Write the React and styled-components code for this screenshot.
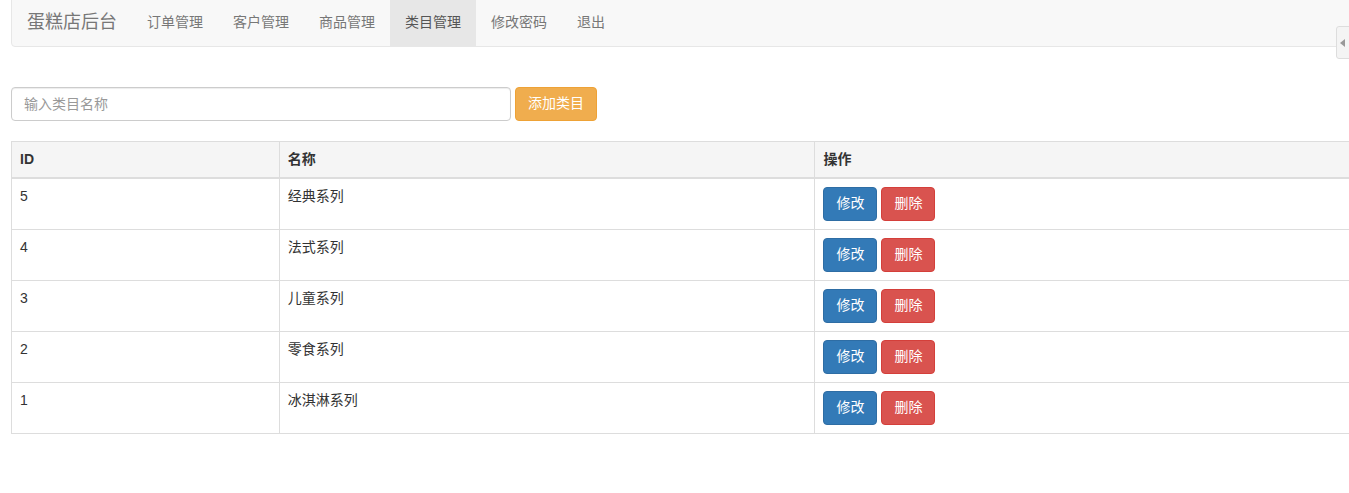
import React from "react";
import styled, { createGlobalStyle } from "styled-components";

const GlobalStyle = createGlobalStyle`
  * { box-sizing: border-box; }
  body {
    margin: 0;
    background: #fff;
    color: #333;
    font-family: "Liberation Sans", "Noto Sans CJK SC", Arial, sans-serif;
    font-size: 14px;
    line-height: 1.42857;
    overflow: hidden;
  }
`;

const Page = styled.div`
  padding-left: 11px;
  width: 1360px;
`;

const Navbar = styled.nav`
  display: flex;
  align-items: stretch;
  height: 48px;
  margin-top: -1px;
  background: #f8f8f8;
  border: 1px solid #e7e7e7;
  border-radius: 0 0 4px 4px;
`;

const Brand = styled.a`
  display: flex;
  align-items: center;
  padding: 0 15px;
  font-size: 18px;
  color: #777;
  text-decoration: none;
`;

const NavLink = styled.a`
  display: flex;
  align-items: center;
  padding: 0 15px;
  color: ${(p) => (p.$active ? "#555" : "#777")};
  background: ${(p) => (p.$active ? "#e7e7e7" : "transparent")};
  text-decoration: none;
`;

const SideTab = styled.div`
  position: fixed;
  top: 26px;
  right: -2px;
  width: 15px;
  height: 33px;
  background: #f4f4f4;
  border: 1px solid #ddd;
  border-radius: 3px 0 0 3px;
  display: flex;
  align-items: center;
  justify-content: center;
`;

const Arrow = styled.span`
  width: 0;
  height: 0;
  border-top: 4px solid transparent;
  border-bottom: 4px solid transparent;
  border-right: 5px solid #999;
  margin-right: 2px;
`;

const FormRow = styled.div`
  display: flex;
  align-items: center;
  gap: 4px;
  margin-top: 40px;
  margin-bottom: 20px;
`;

const Input = styled.input`
  width: 500px;
  height: 34px;
  padding: 6px 12px;
  font-size: 14px;
  font-family: inherit;
  color: #555;
  border: 1px solid #ccc;
  border-radius: 4px;
  box-shadow: inset 0 1px 1px rgba(0, 0, 0, 0.075);
  &::placeholder { color: #999; }
`;

const colors = {
  warning: ["#f0ad4e", "#eea236"],
  primary: ["#337ab7", "#2e6da4"],
  danger: ["#d9534f", "#d43f3a"],
};

const Button = styled.button`
  height: 34px;
  padding: 6px 12px;
  font-size: 14px;
  font-family: inherit;
  line-height: 1.42857;
  color: #fff;
  background: ${(p) => colors[p.$kind][0]};
  border: 1px solid ${(p) => colors[p.$kind][1]};
  border-radius: 4px;
  cursor: pointer;
`;

const Table = styled.table`
  width: 1340px;
  border-collapse: collapse;
  border: 1px solid #ddd;
`;

const Th = styled.th`
  width: ${(p) => p.$w};
  padding: 8px 8px 7px;
  text-align: left;
  font-weight: bold;
  background: #f5f5f5;
  border: 1px solid #ddd;
  border-bottom-width: 2px;
  vertical-align: bottom;
`;

const Td = styled.td`
  padding: 8px;
  border: 1px solid #ddd;
  vertical-align: top;
`;

const Actions = styled.div`
  display: flex;
  gap: 4px;
`;

const rows = [
  [5, "经典系列"],
  [4, "法式系列"],
  [3, "儿童系列"],
  [2, "零食系列"],
  [1, "冰淇淋系列"],
];

const links = ["订单管理", "客户管理", "商品管理", "类目管理", "修改密码", "退出"];

export default function App() {
  return (
    <Page>
      <GlobalStyle />
      <Navbar>
        <Brand>蛋糕店后台</Brand>
        {links.map((l) => (
          <NavLink key={l} $active={l === "类目管理"}>
            {l}
          </NavLink>
        ))}
      </Navbar>
      <SideTab>
        <Arrow />
      </SideTab>
      <FormRow>
        <Input placeholder="输入类目名称" />
        <Button $kind="warning">添加类目</Button>
      </FormRow>
      <Table>
        <thead>
          <tr>
            <Th $w="20%">ID</Th>
            <Th $w="40%">名称</Th>
            <Th $w="40%">操作</Th>
          </tr>
        </thead>
        <tbody>
          {rows.map(([id, name]) => (
            <tr key={id}>
              <Td>{id}</Td>
              <Td>{name}</Td>
              <Td>
                <Actions>
                  <Button $kind="primary">修改</Button>
                  <Button $kind="danger">删除</Button>
                </Actions>
              </Td>
            </tr>
          ))}
        </tbody>
      </Table>
    </Page>
  );
}
